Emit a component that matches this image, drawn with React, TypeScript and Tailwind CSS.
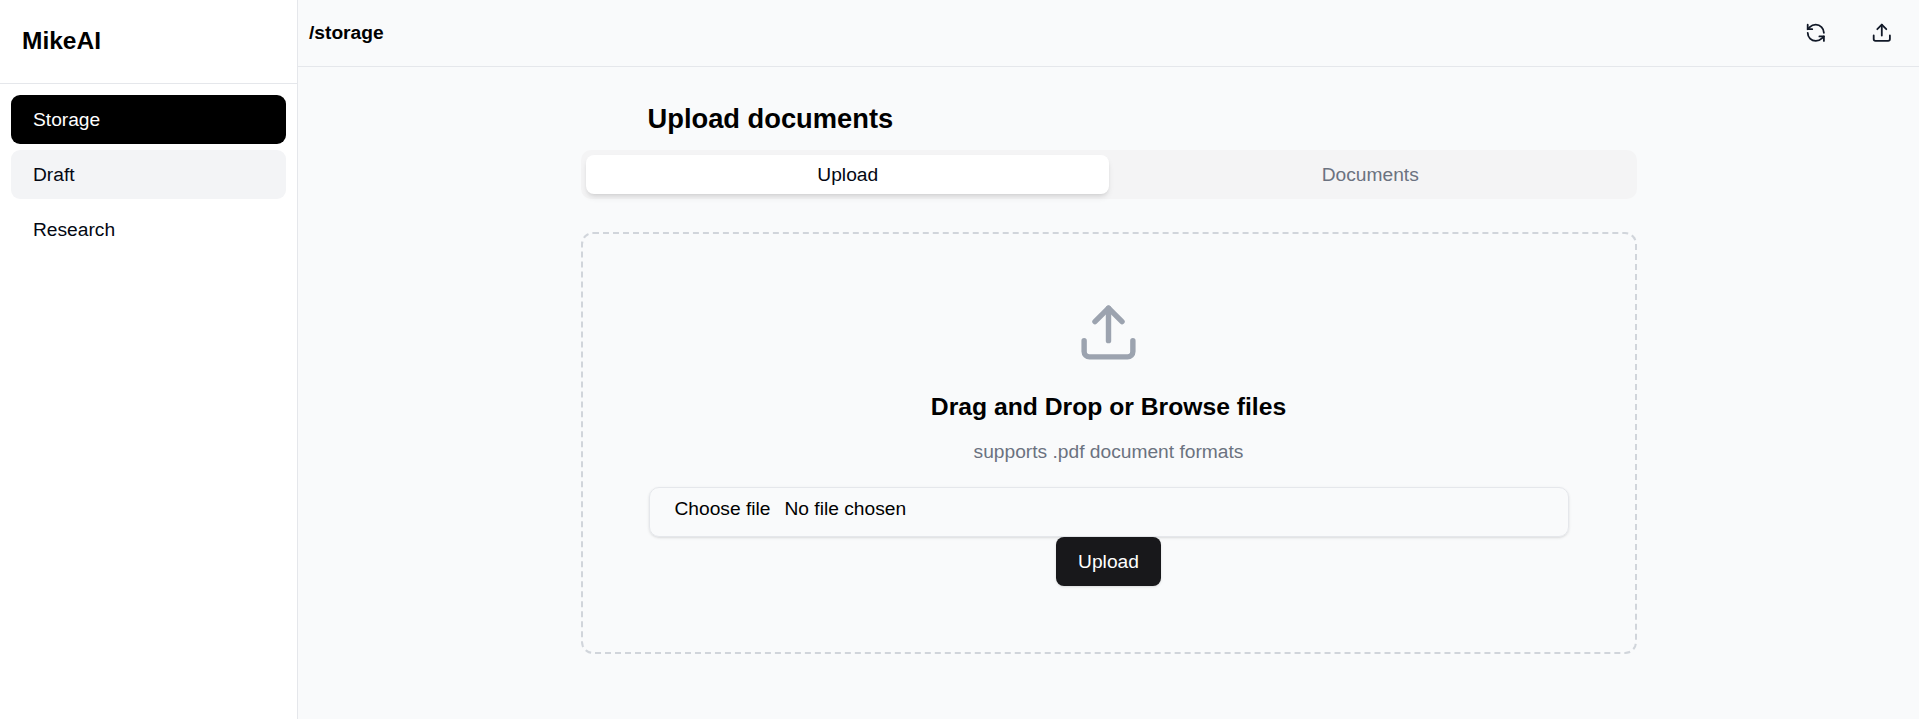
import { RefreshCcw, Upload } from "lucide-react"

const navItems = ["Storage", "Draft", "Research"]

export default function App() {
  return (
    <div className="flex h-screen overflow-hidden bg-[#f9fafb] font-['Liberation_Sans',Arial,sans-serif] text-[19.2px] text-[#030712]">
      {/* Sidebar */}
      <aside className="flex w-[298px] shrink-0 flex-col border-r border-[#e5e7eb] bg-white">
        <div className="flex h-[84px] items-center border-b border-[#e5e7eb] px-[22px]">
          <h1 className="text-[24.5px] font-bold text-black">MikeAI</h1>
        </div>
        <nav className="flex flex-col gap-[6px] px-[11px] pt-[11px]">
          {navItems.map((item) => (
            <a
              key={item}
              className={
                item === "Storage"
                  ? "flex h-[49px] items-center rounded-[9px] bg-black px-[22px] pt-[1px] text-white"
                  : item === "Draft"
                    ? "flex h-[49px] items-center rounded-[9px] bg-[#f3f4f6] px-[22px] pt-[1px]"
                    : "flex h-[49px] items-center rounded-[9px] px-[22px] pt-[1px]"
              }
            >
              {item}
            </a>
          ))}
        </nav>
      </aside>

      <div className="flex min-w-0 flex-1 flex-col">
        {/* Top bar */}
        <header className="flex h-[67px] shrink-0 items-center justify-between border-b border-[#e5e7eb] pl-[11px] pr-[15px]">
          <span className="text-[19.2px] font-bold text-black">/storage</span>
          <div className="flex gap-[22px]">
            <button className="flex h-[44px] w-[44px] items-center justify-center text-[#111827]">
              <RefreshCcw size={21.6} />
            </button>
            <button className="flex h-[44px] w-[44px] items-center justify-center text-[#111827]">
              <Upload size={21.6} />
            </button>
          </div>
        </header>

        <main className="flex flex-1 justify-center">
          <div className="w-[1056px] pt-[34px]">
            <h2 className="pl-[67px] text-[27.3px] leading-[36px] font-bold text-black">Upload documents</h2>

            <div className="mt-[13px] flex h-[49px] items-center rounded-[10px] bg-[#f4f4f5] px-[5px]">
              <button className="flex h-[39px] flex-1 items-center justify-center rounded-[8px] bg-white pl-[1px] pt-[1px] shadow-md">
                Upload
              </button>
              <button className="flex h-[39px] flex-1 items-center justify-center rounded-[8px] pt-[1px] text-[#6b7280]">
                Documents
              </button>
            </div>

            <div className="mt-[33px] flex h-[422px] flex-col items-center rounded-[12px] border-2 border-dashed border-[#d1d5db] px-[66px] pt-[66px]">
              <Upload size={65} className="text-[#9ca3af]" />
              <h3 className="mt-[26px] text-[24.7px] leading-[32px] font-bold text-black">
                Drag and Drop or Browse files
              </h3>
              <p className="mt-[15px] leading-[28px] text-[#6b7280]">supports .pdf document formats</p>
              <label className="mt-[21px] flex h-[50px] w-full gap-[14px] rounded-[10px] border border-[#e5e7eb] pl-[25px] pt-[7px] leading-[28px] text-black shadow-sm">
                <input type="file" className="sr-only" />
                <span>Choose file</span>
                <span>No file chosen</span>
              </label>
              <button className="h-[49px] w-[105px] rounded-[8px] bg-[#18181b] pt-[1px] text-white shadow-sm">Upload</button>
            </div>
          </div>
        </main>
      </div>
    </div>
  )
}
